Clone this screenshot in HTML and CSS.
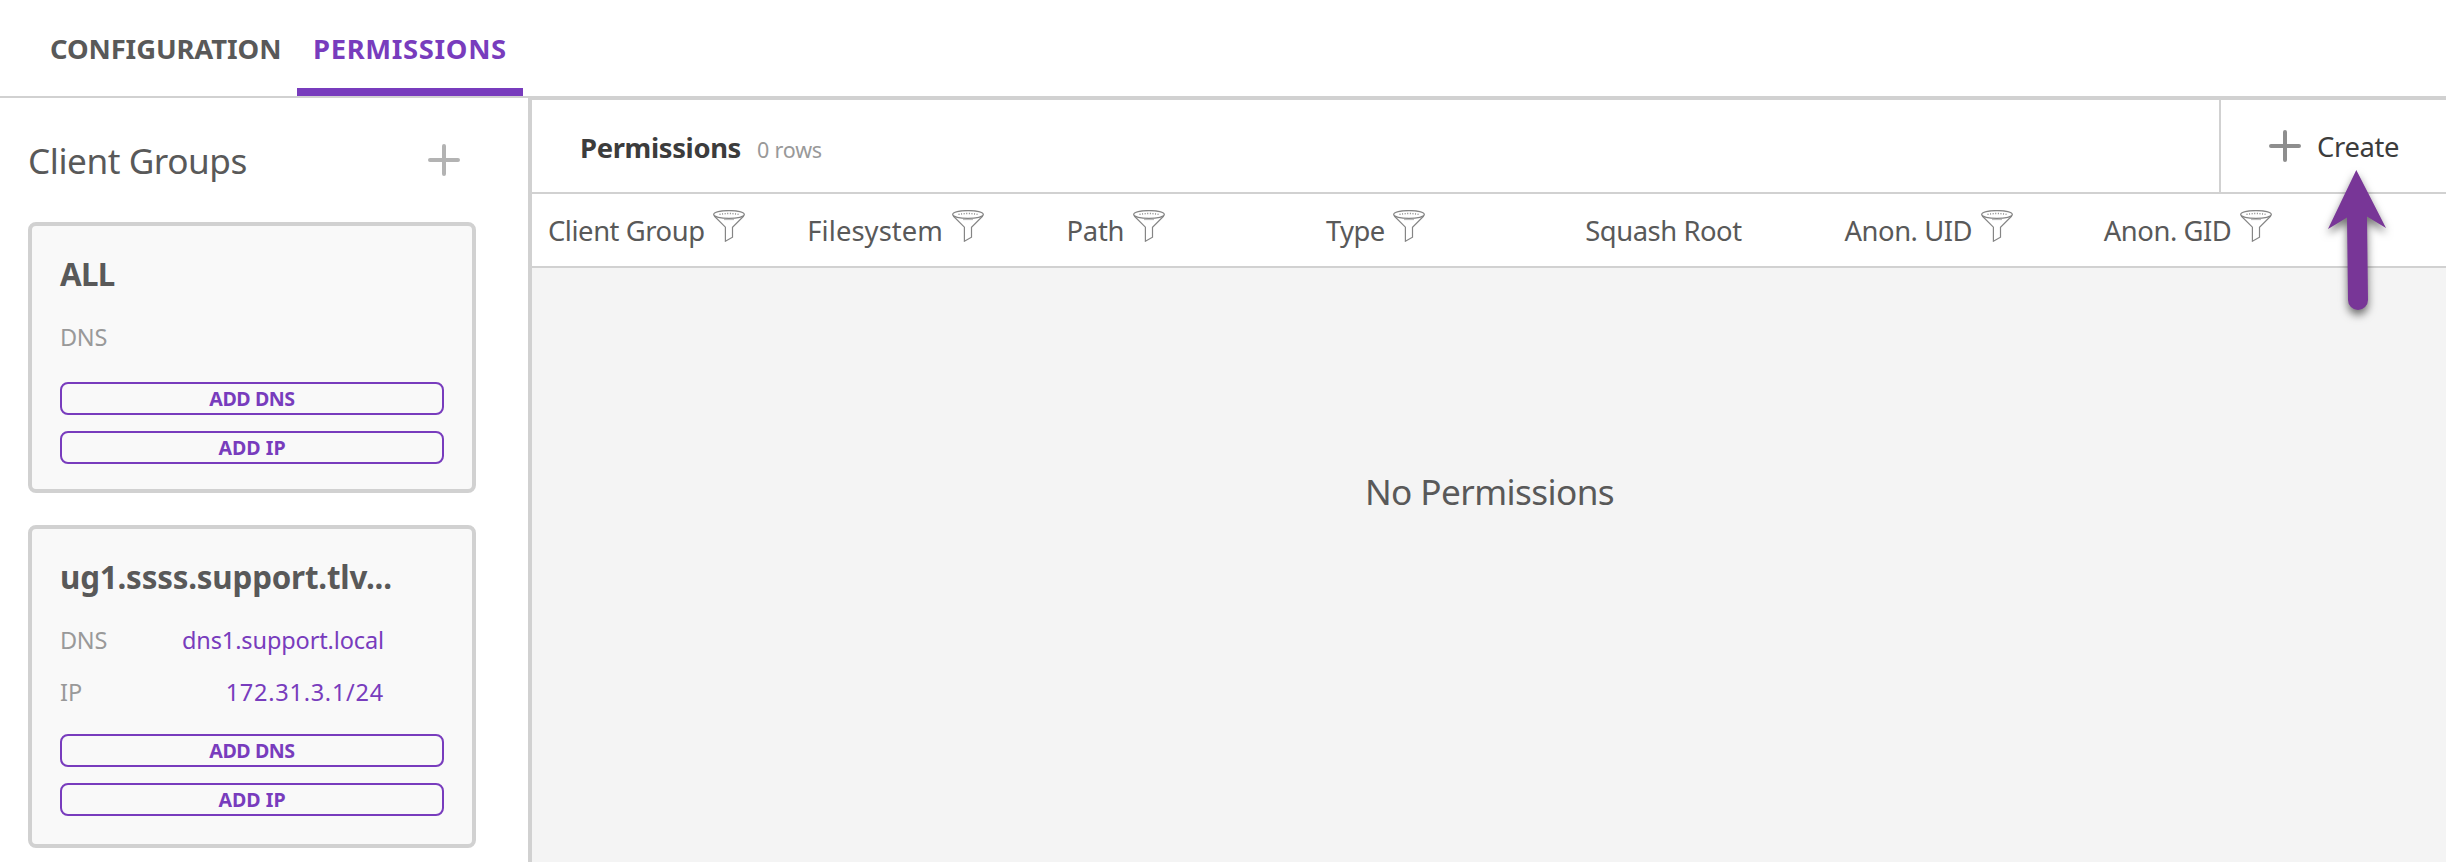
FILE: index.html
```html
<!DOCTYPE html>
<html lang="en">
<head>
<meta charset="utf-8">
<title>Permissions</title>
<link rel="stylesheet" href="styles.css">
</head>
<body>
<svg class="defs" aria-hidden="true">
  <symbol id="plus" viewBox="0 0 32 32">
    <path d="M16 2v28M2 16h28" fill="none" stroke="currentColor" stroke-width="4" stroke-linecap="round"/>
  </symbol>
  <symbol id="funnel" viewBox="0 0 32 32">
    <g fill="none" stroke="currentColor">
      <ellipse cx="16" cy="4.5" rx="15.3" ry="3.9" stroke-width="1.3"/>
      <path d="M1.2 6 12.4 17.2V31.2L19.5 27.2V17.2L30.8 6" stroke-width="1.2"/>
      <path d="M6.5 4.4Q16 2.6 25.5 4.4" stroke-width="1.4" stroke-dasharray="1 1.6"/>
      <path d="M11 9.6h10" stroke-width=".6"/>
    </g>
  </symbol>
</svg>
<nav class="tabs">
  <a class="tab">CONFIGURATION</a>
  <a class="tab tab-active">PERMISSIONS</a>
</nav>
<div class="layout">
  <aside class="sidebar">
    <header class="sidebar-head">
      <h2 class="sidebar-title">Client Groups</h2>
      <svg class="icon add-group"><use href="#plus"/></svg>
    </header>
    <section class="card">
      <h3 class="card-title card-title-short">ALL</h3>
      <dl class="rules">
        <div class="rule"><dt class="dns">DNS</dt></div>
      </dl>
      <button class="btn">ADD DNS</button>
      <button class="btn btn-ip">ADD IP</button>
    </section>
    <section class="card card-rules">
      <h3 class="card-title">ug1.ssss.support.tlv...</h3>
      <dl class="rules">
        <div class="rule"><dt class="dns">DNS</dt><dd class="host">dns1.support.local</dd></div>
        <div class="rule"><dt>IP</dt><dd class="address">172.31.3.1/24</dd></div>
      </dl>
      <button class="btn">ADD DNS</button>
      <button class="btn btn-ip">ADD IP</button>
    </section>
  </aside>
  <main class="panel">
    <header class="toolbar">
      <div class="toolbar-title"><h1 class="title">Permissions</h1><span class="count">0 rows</span></div>
      <div class="create">
        <svg class="icon"><use href="#plus"/></svg><span class="create-label">Create</span>
        <svg class="pointer" viewBox="0 0 80 170"><path d="M30.3 10 60 68 41 56.5 42 140A10 10 0 0 1 22 140L21 57.5 2 69Z"/></svg>
      </div>
    </header>
    <div class="columns">
      <div class="col"><span class="col-group">Client Group</span><svg class="funnel"><use href="#funnel"/></svg></div>
      <div class="col"><span class="col-fs">Filesystem</span><svg class="funnel"><use href="#funnel"/></svg></div>
      <div class="col"><span class="col-path">Path</span><svg class="funnel"><use href="#funnel"/></svg></div>
      <div class="col"><span class="col-type">Type</span><svg class="funnel"><use href="#funnel"/></svg></div>
      <div class="col"><span class="col-squash">Squash Root</span></div>
      <div class="col"><span class="col-anon">Anon. UID</span><svg class="funnel"><use href="#funnel"/></svg></div>
      <div class="col"><span class="col-anon">Anon. GID</span><svg class="funnel"><use href="#funnel"/></svg></div>
    </div>
    <div class="empty">No Permissions</div>
  </main>
</div>
</body>
</html>
```
FILE: styles.css
```css
* { box-sizing: border-box; }
body {
  margin: 0;
  height: 862px;
  overflow: hidden;
  display: flex;
  flex-direction: column;
  background: #fff;
  color: #595959;
  font-family: "Noto Sans", "Open Sans", sans-serif;
}
h1, h2, h3, dl, dt, dd { margin: 0; }
.defs { display: none; }

.tabs {
  flex: none;
  display: flex;
  height: 98px;
  padding-left: 34px;
  border-bottom: 2px solid #d1d1d1;
}
.tab {
  width: 263px;
  padding: 1px 0 0 16px;
  font-size: 27.4px;
  font-weight: 700;
  line-height: 95px;
  letter-spacing: -.1px;
}
.tab-active {
  width: 226px;
  color: #783cbd;
  letter-spacing: .65px;
  box-shadow: inset 0 -8px #783cbd;
}

.layout { flex: 1; display: flex; min-height: 0; }

.sidebar { flex: none; width: 528px; padding-left: 28px; }
.sidebar-head {
  display: flex;
  justify-content: space-between;
  align-items: center;
  width: 448px;
  height: 124px;
  padding: 0 16px 0 0;
}
.sidebar-title {
  font-size: 35.2px;
  font-weight: 400;
  line-height: 44px;
  letter-spacing: -.45px;
}
.icon { width: 32px; height: 32px; color: #8e8e8e; }
.add-group { color: #b3b3b3; }

.card {
  display: flex;
  flex-direction: column;
  width: 448px;
  height: 271px;
  margin-bottom: 32px;
  padding: 28px;
  border: 4px solid #d1d1d1;
  border-radius: 8px;
  background: #f9f9f9;
}
.card-rules { height: 323px; }
.card-title {
  font-size: 31.3px;
  font-weight: 700;
  line-height: 40px;
  letter-spacing: -.18px;
}
.card-title-short { letter-spacing: -.7px; }
.rules {
  display: flex;
  flex-direction: column;
  gap: 20px;
  margin: 27px 0 29px;
  font-size: 23.5px;
  line-height: 32px;
}
.card-rules .rules { margin-bottom: 26px; }
.rule { display: flex; justify-content: space-between; padding-right: 60px; color: #999; }
.dns { letter-spacing: -.3px; }
.host, .address { color: #783cbd; }
.host { letter-spacing: -.12px; }
.address { letter-spacing: .75px; }
.btn {
  flex: none;
  width: 384px;
  height: 33px;
  margin: 0 0 16px;
  padding: 0;
  border: 2px solid #783cbd;
  border-radius: 8px;
  background: transparent;
  color: #783cbd;
  font: 700 19.6px/29px "Noto Sans", "Open Sans", sans-serif;
  letter-spacing: -.44px;
}
.btn-ip { letter-spacing: 0; }

.panel {
  flex: 1;
  display: flex;
  flex-direction: column;
  margin-top: -2px;
  border: solid #d1d1d1;
  border-width: 4px 0 0 4px;
  background: #f4f4f4;
}
.toolbar {
  flex: none;
  display: flex;
  justify-content: space-between;
  height: 94px;
  border-bottom: 2px solid #d1d1d1;
  background: #fff;
}
.toolbar-title {
  display: flex;
  align-items: baseline;
  gap: 16px;
  padding: 3px 0 0 48px;
  line-height: 90px;
}
.title { color: #3c3c3c; font-size: 27.4px; font-weight: 700; letter-spacing: -.35px; }
.count { color: #999; font-size: 21.5px; letter-spacing: -.2px; }
.create {
  position: relative;
  display: flex;
  align-items: center;
  gap: 16px;
  width: 227px;
  padding-left: 48px;
  border-left: 2px solid #d1d1d1;
}
.create-label { color: #3c3c3c; font-size: 27.4px; letter-spacing: -.35px; }
/* Callout arrow floating over the toolbar and the header row */
.pointer {
  position: absolute;
  left: 105px;
  top: 60px;
  width: 80px;
  height: 170px;
  fill: #783697;
  filter: drop-shadow(0 5px 4px rgba(0, 0, 0, .55));
}

.columns {
  flex: none;
  display: grid;
  grid-template-columns: repeat(7, 259.3px);
  height: 74px;
  padding-left: 16px;
  border-bottom: 2px solid #d1d1d1;
  background: #fff;
}
.col { display: flex; align-items: center; gap: 8.5px; font-size: 27.4px; }
.funnel { width: 32px; height: 32px; margin-bottom: 8px; color: #858585; }
.col-group { letter-spacing: -.44px; }
.col-fs { letter-spacing: .08px; }
.col-path { letter-spacing: -.3px; }
.col-type { letter-spacing: -.55px; }
.col-squash { letter-spacing: -.45px; }
.col-anon { letter-spacing: -.45px; }

.empty {
  padding-top: 201px;
  padding-left: 1px;
  font-size: 35.2px;
  line-height: 44px;
  letter-spacing: -.6px;
  text-align: center;
}
```
